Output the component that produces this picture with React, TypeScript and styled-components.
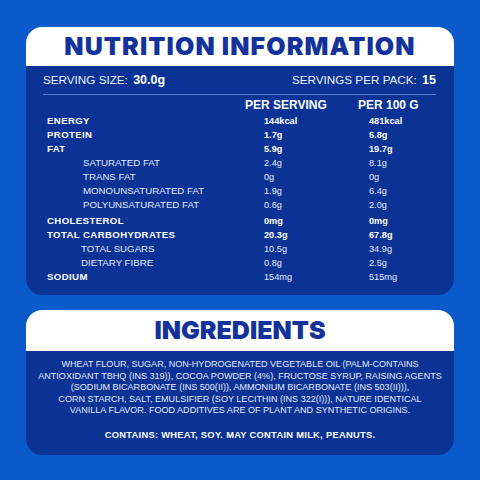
import styled, { createGlobalStyle } from "styled-components";

const GlobalStyle = createGlobalStyle`
  html, body {
    margin: 0;
    padding: 0;
    background: #0a5bc9;
  }
`;

const Page = styled.div`
  width: 480px;
  height: 480px;
  box-sizing: border-box;
  padding: 27px 26px 0;
  display: flex;
  flex-direction: column;
  gap: 15px;
  font-family: "Liberation Sans", Arial, sans-serif;
  color: #ffffff;
`;

const Card = styled.section`
  background: #0b3396;
  border-radius: 16px;
  overflow: hidden;
`;

const CardHeader = styled.div<{ $h: number }>`
  height: ${(p) => p.$h}px;
  background: #ffffff;
  display: flex;
  align-items: center;
  justify-content: center;
`;

const Title = styled.h1<{ $spacing: number }>`
  margin: 0;
  font-family: Inter, "Noto Sans", sans-serif;
  font-weight: 900;
  font-size: 25px;
  letter-spacing: ${(p) => p.$spacing}px;
  color: #14329c;
  line-height: 1;
`;

const NutritionBody = styled.div`
  padding: 0 18px 11px 17px;
`;

const ServingRow = styled.div`
  height: 28px;
  display: flex;
  align-items: center;
  justify-content: space-between;
  font-size: 11.7px;
  color: #eef2fb;
  border-bottom: 1px solid #5a7fcf;
`;

const ServingValue = styled.span`
  font-size: 12.5px;
  font-weight: 700;
  color: #ffffff;
  margin-left: 2px;
`;

const Grid = styled.div`
  display: grid;
  grid-template-columns: 198px 113px 1fr;
  padding-left: 4px;
  padding-top: 2px;
`;

const ColHead = styled.div`
  font-weight: 700;
  font-size: 12px;
  line-height: 16px;
  height: 17px;
`;

const Label = styled.div<{ $indent: number; $bold: boolean; $gap: number }>`
  padding-left: ${(p) => p.$indent}px;
  margin-top: ${(p) => p.$gap}px;
  font-size: ${(p) => (p.$bold ? "9.6px" : "9.7px")};
  font-weight: ${(p) => (p.$bold ? 700 : 400)};
  letter-spacing: ${(p) => (p.$bold ? "0.4px" : "0")};
  line-height: 14px;
  height: 14px;
  white-space: nowrap;
  color: ${(p) => (p.$bold ? "#ffffff" : "#e4eaf8")};
`;

const Value = styled.div<{ $offset: number; $bold: boolean; $gap: number }>`
  padding-left: ${(p) => p.$offset}px;
  margin-top: ${(p) => p.$gap}px;
  font-size: 9.2px;
  font-weight: ${(p) => (p.$bold ? 700 : 400)};
  line-height: 14px;
  height: 14px;
  color: ${(p) => (p.$bold ? "#ffffff" : "#e4eaf8")};
`;

const IngredientsBody = styled.div`
  padding: 8px 10px 14px;
  text-align: center;
`;

const IngredientsText = styled.p`
  margin: 0;
  font-size: 9.05px;
  line-height: 11.6px;
  white-space: nowrap;
  color: #e4eaf8;
`;

const Contains = styled.p`
  margin: 12px 0 0;
  font-size: 9.3px;
  font-weight: 700;
  letter-spacing: 0.3px;
  line-height: 12px;
`;

type Row = {
  label: string;
  serving: string;
  per100: string;
  bold: boolean;
  indent: number;
  gap?: number;
};

const rows: Row[] = [
  { label: "ENERGY", serving: "144kcal", per100: "481kcal", bold: true, indent: 0 },
  { label: "PROTEIN", serving: "1.7g", per100: "5.8g", bold: true, indent: 0 },
  { label: "FAT", serving: "5.9g", per100: "19.7g", bold: true, indent: 0 },
  { label: "SATURATED FAT", serving: "2.4g", per100: "8.1g", bold: false, indent: 36 },
  { label: "TRANS FAT", serving: "0g", per100: "0g", bold: false, indent: 36 },
  { label: "MONOUNSATURATED FAT", serving: "1.9g", per100: "6.4g", bold: false, indent: 36 },
  { label: "POLYUNSATURATED FAT", serving: "0.6g", per100: "2.0g", bold: false, indent: 36 },
  { label: "CHOLESTEROL", serving: "0mg", per100: "0mg", bold: true, indent: 0, gap: 2 },
  { label: "TOTAL CARBOHYDRATES", serving: "20.3g", per100: "67.8g", bold: true, indent: 0 },
  { label: "TOTAL SUGARS", serving: "10.5g", per100: "34.9g", bold: false, indent: 34 },
  { label: "DIETARY FIBRE", serving: "0.8g", per100: "2.5g", bold: false, indent: 34 },
  { label: "SODIUM", serving: "154mg", per100: "515mg", bold: false, indent: 0 },
];

function App() {
  return (
    <>
      <GlobalStyle />
      <Page>
        <Card>
          <CardHeader $h={39}>
            <Title $spacing={1.1}>NUTRITION INFORMATION</Title>
          </CardHeader>
          <NutritionBody>
            <ServingRow>
              <span>
                SERVING SIZE: <ServingValue>30.0g</ServingValue>
              </span>
              <span>
                SERVINGS PER PACK: <ServingValue>15</ServingValue>
              </span>
            </ServingRow>
            <Grid>
              <ColHead />
              <ColHead>PER SERVING</ColHead>
              <ColHead>PER 100 G</ColHead>
              {rows.map((r) => (
                <>
                  <Label key={r.label} $indent={r.indent} $bold={r.bold || r.label === "SODIUM"} $gap={r.gap ?? 0}>
                    {r.label}
                  </Label>
                  <Value key={r.label + "s"} $offset={19} $bold={r.bold} $gap={r.gap ?? 0}>
                    {r.serving}
                  </Value>
                  <Value key={r.label + "p"} $offset={11} $bold={r.bold} $gap={r.gap ?? 0}>
                    {r.per100}
                  </Value>
                </>
              ))}
            </Grid>
          </NutritionBody>
        </Card>
        <Card>
          <CardHeader $h={41}>
            <Title $spacing={0}>INGREDIENTS</Title>
          </CardHeader>
          <IngredientsBody>
            <IngredientsText>
              WHEAT FLOUR, SUGAR, NON-HYDROGENATED VEGETABLE OIL (PALM-CONTAINS
              <br />
              ANTIOXIDANT TBHQ (INS 319)), COCOA POWDER (4%), FRUCTOSE SYRUP, RAISING AGENTS
              <br />
              (SODIUM BICARBONATE (INS 500(II)), AMMONIUM BICARBONATE (INS 503(II))),
              <br />
              CORN STARCH, SALT, EMULSIFIER (SOY LECITHIN (INS 322(I))), NATURE IDENTICAL
              <br />
              VANILLA FLAVOR. FOOD ADDITIVES ARE OF PLANT AND SYNTHETIC ORIGINS.
            </IngredientsText>
            <Contains>CONTAINS: WHEAT, SOY. MAY CONTAIN MILK, PEANUTS.</Contains>
          </IngredientsBody>
        </Card>
      </Page>
    </>
  );
}

export default App;
